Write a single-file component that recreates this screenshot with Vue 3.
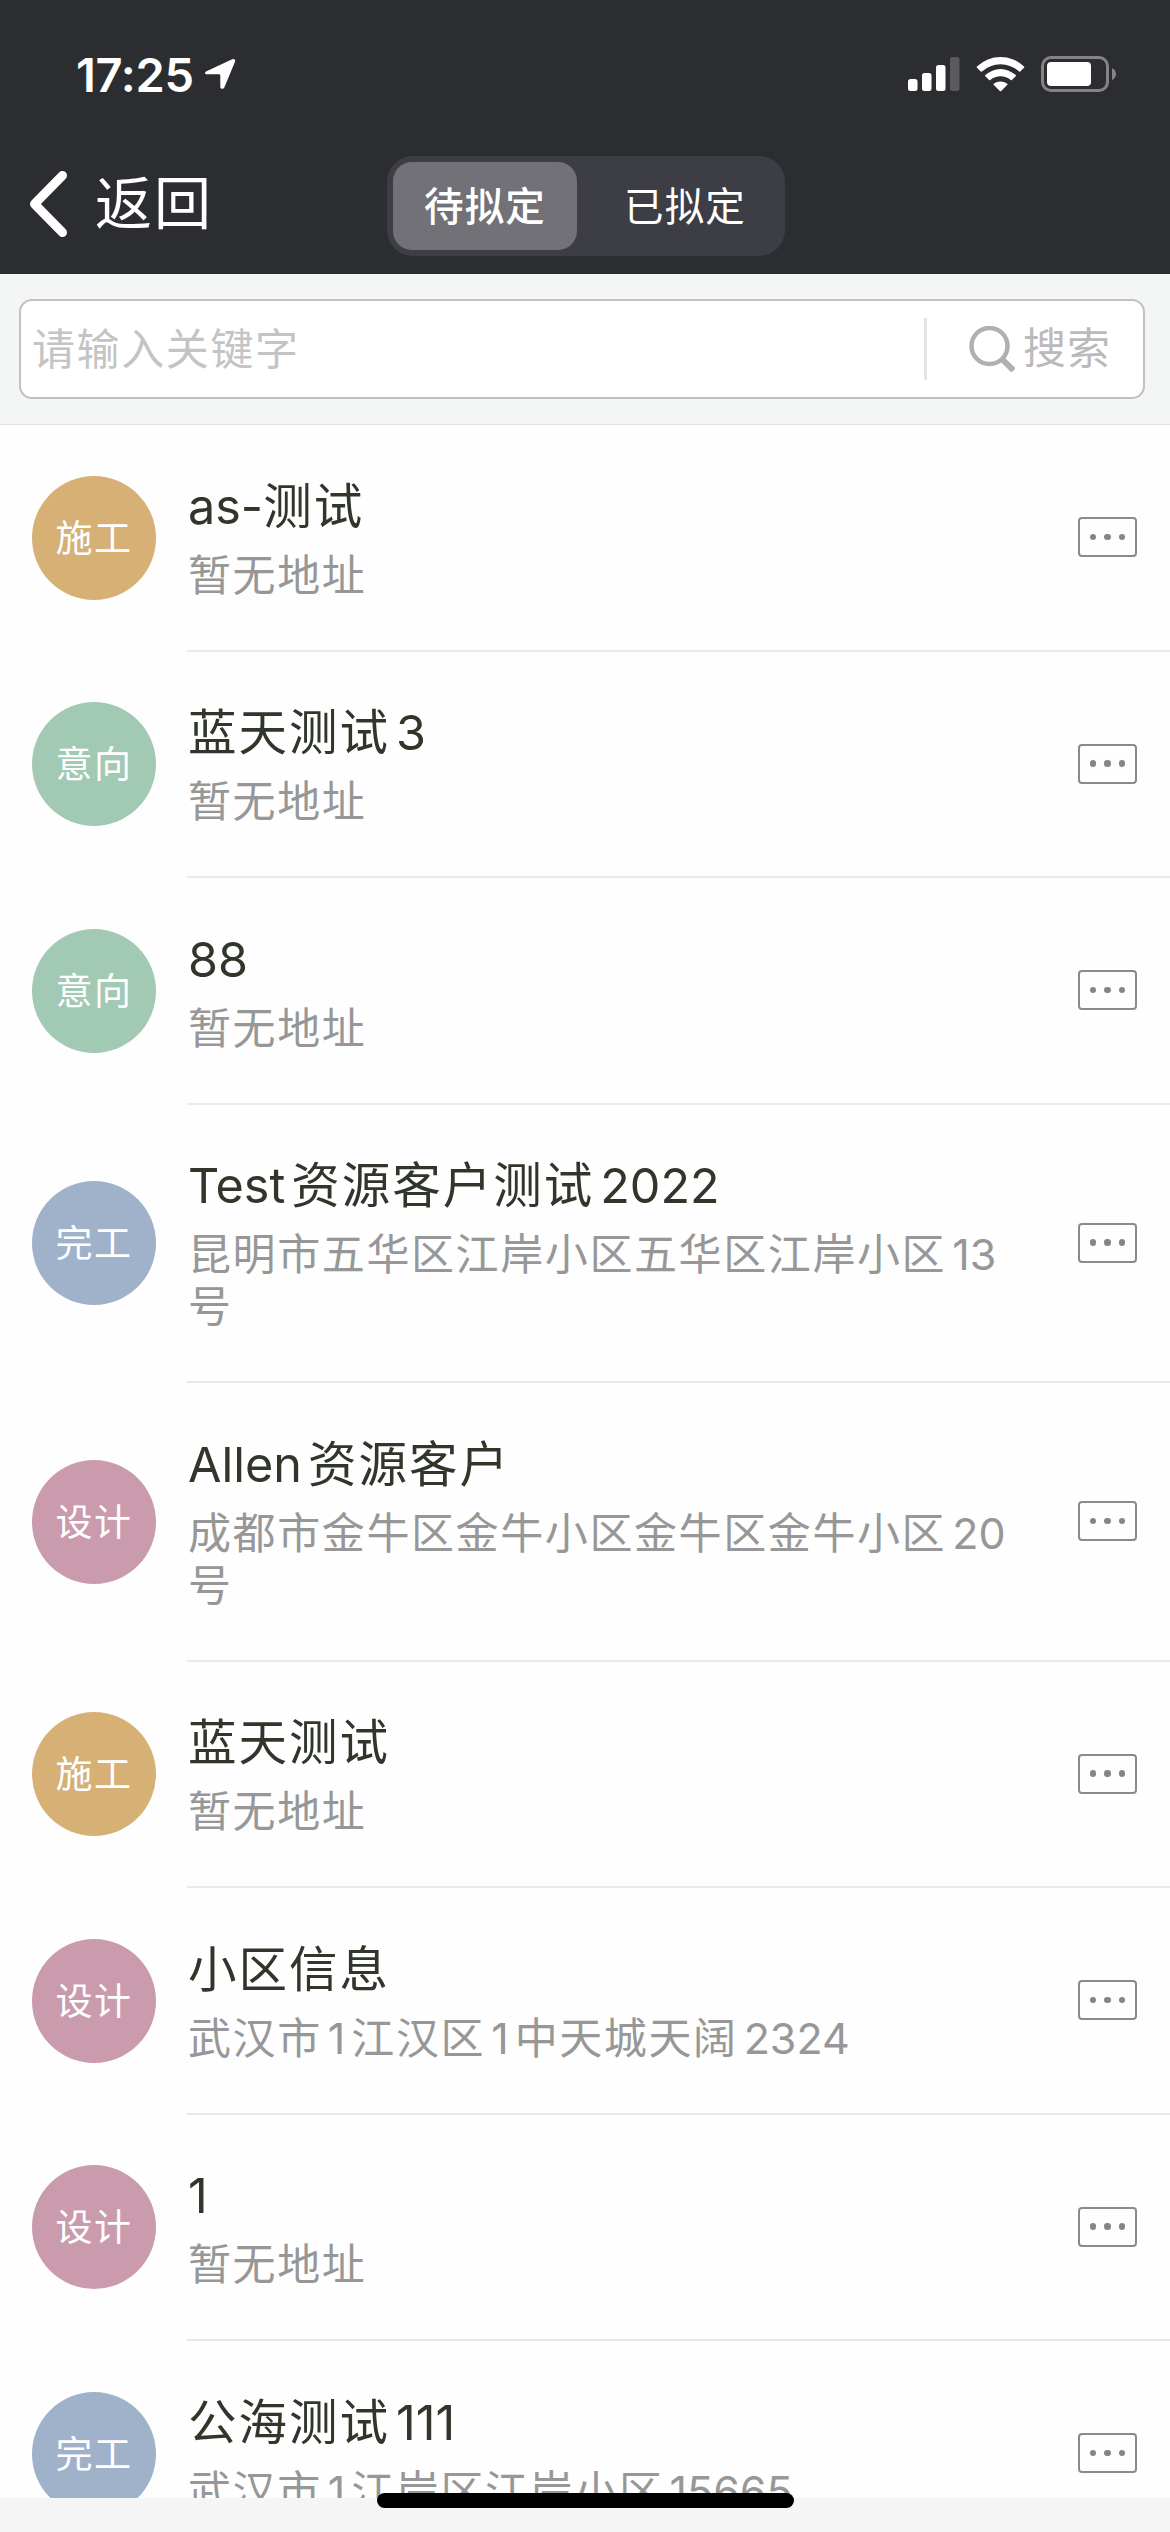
<template>
  <div class="page">
    <header class="header">
      <div class="status-bar">
        <div class="clock">
          <span>17:25</span>
          <svg class="location" viewBox="0 0 32 32">
            <path d="M2.5 13.2 28.2 1.2C30.300 .3 31.700 1.700 31 3.800L20.300 29.500C19.400 31.500 16.300 31.200 16.300 28.800V17.400Q16.300 16.200 15.100 16.200H3.200C.6 16.200 .2 14.200 2.500 13.200Z" fill="#fff" />
          </svg>
        </div>
        <div class="status-icons">
          <svg class="signal" viewBox="0 0 52 36">
            <rect x="0" y="23" width="9.500" height="12" rx="2.500" fill="#fff" />
            <rect x="14" y="17" width="9.500" height="18" rx="2.500" fill="#fff" />
            <rect x="28" y="9" width="9.500" height="26" rx="2.500" fill="#fff" />
            <rect x="42" y="1" width="9.500" height="34" rx="2.500" fill="#5b5b5f" />
          </svg>
          <svg class="wifi" viewBox="0 0 50 36">
            <path d="M1 10.300Q.4 11 1 11.700L4.800 15.500Q5.300 16 6 15.400A28.500 28.500 0 0 1 44 15.400Q44.700 16 45.200 15.500L49 11.700Q49.600 11 49 10.300A35 35 0 0 0 1 10.300Z" fill="#fff" />
            <path d="M9.400 19.100Q8.900 19.700 9.500 20.300L13.400 24Q14 24.500 14.600 24A16.500 16.500 0 0 1 35.400 24Q36 24.500 36.600 24L40.500 20.300Q41.100 19.700 40.600 19.100A23 23 0 0 0 9.400 19.100Z" fill="#fff" />
            <path d="M18 28Q17.500 28.500 18 29L24.300 35.300Q25 36 25.700 35.300L32 29Q32.500 28.500 32 28A11.500 11.500 0 0 0 18 28Z" fill="#fff" />
          </svg>
          <svg class="battery" viewBox="0 0 76 36">
            <rect x="1.500" y="1.500" width="65" height="33" rx="8.500" fill="none" stroke="#848487" stroke-width="3" />
            <rect x="6" y="6" width="44" height="24" rx="4" fill="#fff" />
            <path d="M71 12Q75 14 75 18T71 24Z" fill="#848487" />
          </svg>
        </div>
      </div>
      <div class="nav-bar">
        <button class="back">
          <svg viewBox="0 0 38 66">
            <path d="M33.500 4.500 5.500 33 33.500 61.500" fill="none" stroke="#fff" stroke-width="9" stroke-linecap="round" stroke-linejoin="round" />
          </svg>
          <span>返回</span>
        </button>
        <div class="segment">
          <button
            v-for="tab in tabs"
            :key="tab"
            :class="{ active: tab === activeTab }"
            @click="activeTab = tab"
          >{{ tab }}</button>
        </div>
      </div>
    </header>

    <div class="search-wrap">
      <div class="search-box">
        <input v-model="keyword" type="text" placeholder="请输入关键字" />
        <button class="search-btn">
          <svg viewBox="0 0 46 46">
            <circle cx="20.500" cy="20" r="18" fill="none" stroke="#b0b0b0" stroke-width="4.500" />
            <path d="M33 33 44.500 44.500" stroke="#b0b0b0" stroke-width="6" />
          </svg>
          <span>搜索</span>
        </button>
      </div>
    </div>

    <main class="list">
      <div v-for="(item, index) in customers" :key="index" class="row">
        <div class="avatar" :class="item.type">{{ labels[item.type] }}</div>
        <div class="row-body">
          <div class="info">
            <div class="name">
              <span
                v-for="(part, i) in split(item.name)"
                :key="i"
                :class="{ han: part.han, gap: part.gap }"
              >{{ part.text }}</span>
            </div>
            <div class="address">
              <span
                v-for="(part, i) in split(item.address)"
                :key="i"
                :class="{ han: part.han, gap: part.gap }"
              >{{ part.text }}</span>
            </div>
          </div>
          <button class="more"><i></i><i></i><i></i></button>
        </div>
      </div>
    </main>

    <footer class="bottom">
      <div class="home-indicator"></div>
    </footer>
  </div>
</template>

<script setup>
import { ref } from 'vue'

const tabs = ['待拟定', '已拟定']
const activeTab = ref('待拟定')
const keyword = ref('')

const labels = {
  build: '施工',
  intent: '意向',
  done: '完工',
  design: '设计'
}

const customers = ref([
  { type: 'build', name: 'as-测试', address: '暂无地址' },
  { type: 'intent', name: '蓝天测试3', address: '暂无地址' },
  { type: 'intent', name: '88', address: '暂无地址' },
  { type: 'done', name: 'Test资源客户测试2022', address: '昆明市五华区江岸小区五华区江岸小区13号' },
  { type: 'design', name: 'Allen资源客户', address: '成都市金牛区金牛小区金牛区金牛小区20号' },
  { type: 'build', name: '蓝天测试', address: '暂无地址' },
  { type: 'design', name: '小区信息', address: '武汉市1江汉区1中天城天阔2324' },
  { type: 'design', name: '1', address: '暂无地址' },
  { type: 'done', name: '公海测试111', address: '武汉市1江岸区江岸小区15665' }
])

function split(text) {
  const runs = text.match(/[\u4e00-\u9fff]+|[^\u4e00-\u9fff]+/g)
  return runs.map((run, i) => ({
    text: run,
    han: /[\u4e00-\u9fff]/.test(run),
    gap: i > 0 && !runs[i - 1].endsWith('-')
  }))
}
</script>

<style>
body {
  margin: 0;
  background-color: #fefefe;
}
</style>

<style scoped>
.page {
  display: flex;
  flex-direction: column;
  width: 1170px;
  height: 2532px;
  overflow: hidden;
  background-color: #fefefe;
  font-family: Inter, 'Noto Sans CJK SC', sans-serif;
}

button {
  padding: 0;
  border: none;
  background: none;
  font-family: inherit;
  cursor: pointer;
}

svg {
  display: block;
}

.header {
  flex: none;
  height: 274px;
  background-color: #2c2d31;
  color: #fff;
}

.status-bar {
  display: flex;
  justify-content: space-between;
  align-items: center;
  height: 148px;
  padding: 0 53px 0 76px;
}

.clock {
  display: flex;
  align-items: center;
  gap: 10px;
  font-size: 47px;
  font-weight: 600;
  letter-spacing: -0.3px;
}

.location {
  width: 32px;
  height: 32px;
}

.status-icons {
  display: flex;
  align-items: center;
  gap: 16px;
}

.signal {
  width: 52px;
  height: 36px;
}

.wifi {
  width: 49px;
  height: 36px;
}

.battery {
  width: 76px;
  height: 36px;
}

.nav-bar {
  display: grid;
  grid-template-columns: 387px 398px;
  align-items: center;
  height: 116px;
}

.back {
  display: flex;
  align-items: center;
  gap: 28px;
  padding: 0 0 4px 29px;
  color: #fff;
  font-size: 57px;
  font-weight: 400;
  letter-spacing: 2px;
  line-height: 70px;
}

.back svg {
  width: 38px;
  height: 66px;
}

.segment {
  display: grid;
  grid-template-columns: 184px 1fr;
  gap: 14px;
  box-sizing: border-box;
  height: 100px;
  padding: 6px;
  border-radius: 26px;
  background-color: #3d3d45;
}

.segment button {
  padding-bottom: 5px;
  border-radius: 19px;
  color: #fff;
  font-size: 39.5px;
  letter-spacing: 1.2px;
}

.segment .active {
  background-color: #717177;
  font-weight: 500;
}

.search-wrap {
  flex: none;
  box-sizing: border-box;
  height: 151px;
  padding: 25px 25px 0 19px;
  border-bottom: 1px solid #dedede;
  background-color: #f4f5f5;
}

.search-box {
  display: flex;
  align-items: center;
  box-sizing: border-box;
  height: 100px;
  border: 2px solid #c0c1c0;
  border-radius: 13px;
  background-color: #fff;
}

.search-box input {
  flex: 1;
  min-width: 0;
  padding: 0 0 0 11px;
  border: none;
  outline: none;
  background: none;
  font-family: inherit;
  font-size: 43px;
  letter-spacing: 1.6px;
}

.search-box input::placeholder {
  color: #c4c4c4;
}

.search-btn {
  display: flex;
  align-items: center;
  gap: 8px;
  width: 219px;
  height: 62px;
  box-sizing: border-box;
  padding-left: 42px;
  border-left: 3px solid #e3e3e3;
  color: #bababa;
  font-size: 43px;
  letter-spacing: 1px;
  line-height: 58px;
  white-space: nowrap;
}

.search-btn span {
  padding-bottom: 2px;
}

.search-btn svg {
  width: 46px;
  height: 46px;
}

.list {
  flex: 1;
  min-height: 0;
  overflow: hidden;
}

.row {
  display: flex;
  align-items: center;
  gap: 31px;
  padding-left: 32px;
}

.avatar {
  flex: none;
  width: 124px;
  height: 124px;
  margin-bottom: 1.5px;
  border-radius: 50%;
  color: #fff;
  font-size: 37px;
  letter-spacing: 1.5px;
  line-height: 125px;
  text-align: center;
}

.build {
  background-color: #d7b076;
}

.intent {
  background-color: #a2c9b3;
}

.done {
  background-color: #a0b1ca;
}

.design {
  background-color: #ca9bad;
}

.row-body {
  display: flex;
  flex: 1;
  justify-content: space-between;
  align-items: center;
  padding: 50.5px 33px 49px 1px;
  border-bottom: 2px solid #e9e9e9;
}

.info {
  width: 840px;
}

.name {
  margin-bottom: 12px;
  color: #30362a;
  font-size: 48.5px;
  line-height: 61px;
}

.name .han {
  letter-spacing: 2px;
}

.name .gap {
  margin-left: 6px;
}

.address {
  color: #979797;
  font-size: 43px;
  line-height: 52px;
}

.address .han {
  letter-spacing: 1.6px;
}

.address .gap {
  margin-left: 6px;
}

/* the trailing run of a two-line address starts flush left */
.address .gap.han:last-child {
  margin-left: 0;
}

.more {
  display: flex;
  justify-content: center;
  align-items: center;
  gap: 8px;
  box-sizing: border-box;
  width: 59px;
  height: 40px;
  margin-bottom: 2px;
  border: 2px solid #8a8a8a;
  border-radius: 4px;
}

.more i {
  width: 6.5px;
  height: 6.5px;
  border-radius: 50%;
  background-color: #858585;
}

.bottom {
  position: relative;
  flex: none;
  height: 34px;
  background-color: #f5f5f5;
}

/* overlaps the end of the list */
.home-indicator {
  position: absolute;
  top: -5px;
  left: 377px;
  width: 417px;
  height: 15px;
  border-radius: 8px;
  background-color: #000;
}
</style>
